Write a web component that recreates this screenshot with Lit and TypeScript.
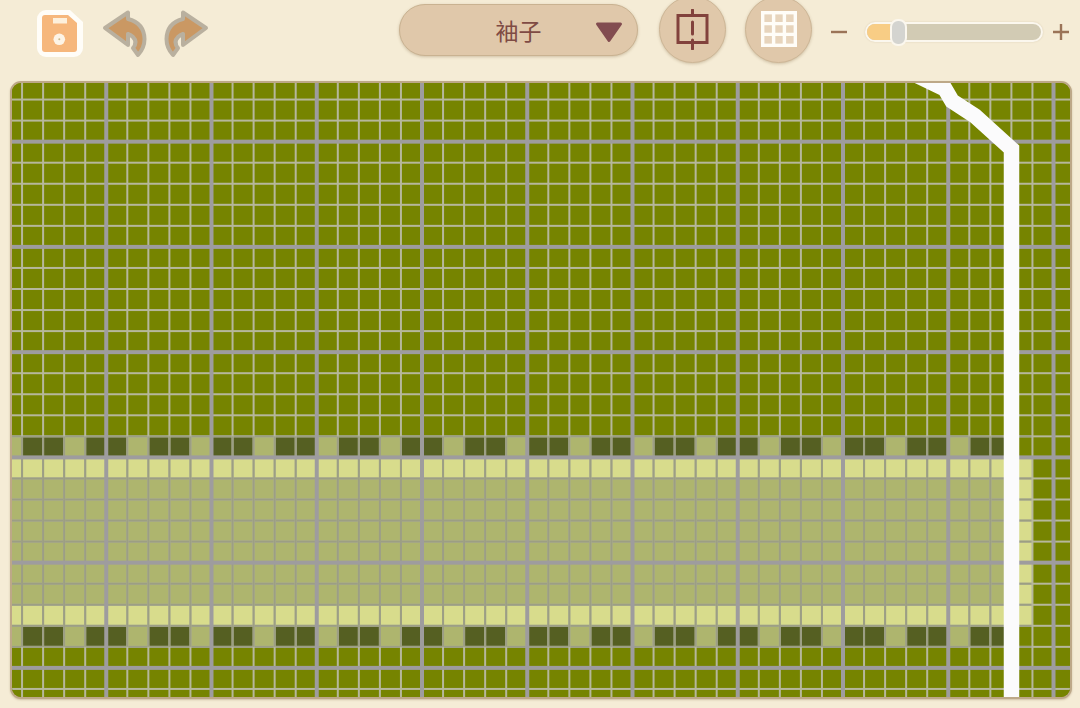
import { LitElement, html, css, svg } from "lit";
import { customElement } from "lit/decorators.js";

const P = 21.05, OX = 1, OY = 36.4, COLS = 50, ROWS = 31;
const xAt = (n: number) => OX + P * n;
const yAt = (n: number) => OY + P * n;
const BAND_END = xAt(49);
const GREEN = "#768400", MID = "#aeb56e", LIGHT = "#d8dc8c", DARK = "#555f22";
const THICK = "#9e9c9e", THIN_ON_GREEN = "#b6b79c", THIN_ON_BAND = "#9c9e84";

function cellColor(c: number, r: number): string {
  if (r === 19 || r === 28) {
    if (c >= 48) return GREEN;
    return c % 3 === 0 ? MID : DARK;
  }
  if (r >= 20 && r <= 27) {
    if (c === 48) return LIGHT;
    return r === 20 || r === 27 ? LIGHT : MID;
  }
  return GREEN;
}

function gridCells() {
  const out = [];
  for (let r = 19; r <= 28; r++) {
    for (let c = 0; c <= 48; c++) {
      const f = cellColor(c, r);
      if (f !== GREEN) out.push(svg`<rect x=${xAt(c)} y=${yAt(r)} width=${P + 0.5} height=${P + 0.5} fill=${f}></rect>`);
    }
  }
  return out;
}

function gridLines() {
  const out = [];
  const bandTop = yAt(19), bandBottom = yAt(29);
  for (let k = 0; k <= ROWS; k++) {
    if (k % 5 === 0) continue;
    const y = yAt(k) - 1;
    out.push(svg`<rect x="0" y=${y} width="1080" height="2" fill=${THIN_ON_GREEN}></rect>`);
    if (k >= 19 && k <= 29) out.push(svg`<rect x="0" y=${y} width=${BAND_END} height="2" fill=${THIN_ON_BAND}></rect>`);
  }
  for (let c = 0; c <= COLS + 1; c++) {
    if (c % 5 === 0) continue;
    const x = xAt(c) - 1;
    out.push(svg`<rect x=${x} y="0" width="2" height="708" fill=${THIN_ON_GREEN}></rect>`);
    if (c <= 48) out.push(svg`<rect x=${x} y=${bandTop} width="2" height=${bandBottom - bandTop} fill=${THIN_ON_BAND}></rect>`);
  }
  for (let k = 0; k <= ROWS; k += 5) {
    out.push(svg`<rect x="0" y=${yAt(k) - 2} width="1080" height="4" fill=${THICK}></rect>`);
  }
  for (let c = 0; c <= COLS; c += 5) {
    out.push(svg`<rect x=${xAt(c) - 2} y="0" width="4" height="708" fill=${THICK}></rect>`);
  }
  return out;
}

const ARROW = "M3 24 L26 8.5 V15 Q42 19 42.5 35 Q42.5 44 36 51 L31 44 Q36 38 31 33 Q29 31 26 30 V41 Z";

@customElement("app-root")
export class AppRoot extends LitElement {
  static styles = css`
    :host { display: block; width: 1080px; height: 708px; overflow: hidden; background: #f5ecd6; font-family: "Noto Sans CJK SC", "Liberation Sans", sans-serif; }
    .bar { display: flex; align-items: center; height: 58px; margin-bottom: 23px; padding-left: 37px; }
    .save { width: 46px; height: 47px; margin-right: 19px; margin-top: 9px; flex: none; }
    .arrow { width: 46px; height: 50px; flex: none; overflow: visible; }
    .redo { margin-left: 15px; margin-right: 190px; transform: scaleX(-1); }
    .select { box-sizing: border-box; width: 239px; height: 52px; margin-top: 2px; border-radius: 26px; background: #e0c8aa; border: 1px solid #c9b291; box-shadow: 0 1px 3px rgba(120, 90, 50, .3); display: grid; grid-template-columns: 1fr auto 1fr; align-items: center; margin-right: 21px; flex: none; color: #7f4b44; font-size: 23px; line-height: 46px; }
    .select .label { grid-column: 2; }
    .select svg { justify-self: end; margin-right: 14px; margin-top: 4px; }
    .round { box-sizing: border-box; width: 67px; height: 67px; border-radius: 50%; background: #e0c8aa; border: 1px solid #cdb696; box-shadow: 0 1px 3px rgba(120, 90, 50, .3); display: flex; align-items: center; justify-content: center; flex: none; margin-right: 18px; }
    .split { margin-right: 19px; }
    .sign { width: 20px; height: 20px; flex: none; margin-left: -1px; margin-top: 6px; }
    .track { box-sizing: border-box; width: 178px; height: 20px; margin: 6px 9px 0 16px; border-radius: 10px; border: 2px solid #fbf7ee; background: #d2cbb4; flex: none; display: flex; align-items: center; box-shadow: 0 0 2px rgba(120, 90, 50, .2); }
    .fill { width: 23px; align-self: stretch; background: #f8cd85; border-radius: 8px 0 0 8px; }
    .thumb { box-sizing: border-box; width: 17px; height: 27px; border-radius: 8px; border: 2px solid #fbf7ee; background: #d4d4d0; flex: none; }
    .canvas { box-sizing: border-box; width: 1062px; height: 618px; margin-left: 10px; border: 2px solid #bda888; border-radius: 11px; overflow: hidden; background: #768400; box-shadow: 0 1px 2px rgba(120, 90, 50, .3); }
    .canvas svg { display: block; }
  `;

  render() {
    return html`
      <div class="bar">
        <svg class="save" viewBox="0 0 46 47">
          <path d="M9 0H33L46 12V38A9 9 0 0 1 37 47H9A9 9 0 0 1 0 38V9A9 9 0 0 1 9 0Z" fill="#fffdf8"></path>
          <path d="M8 5H31L40 13V39A3 3 0 0 1 37 42H8A3 3 0 0 1 5 39V8A3 3 0 0 1 8 5Z" fill="#f6b77c"></path>
          <rect x="16" y="8" width="14" height="5.5" fill="#fdf0dc"></rect>
          <circle cx="22.3" cy="29.3" r="5.8" fill="#fdf4e6"></circle>
          <circle cx="22.3" cy="29.3" r="1" fill="#c9b88a"></circle>
        </svg>
        <svg class="arrow" viewBox="0 0 46 50">
          <path d=${ARROW} fill="#ca9863" stroke="#b9b09f" stroke-width="4" stroke-linejoin="round"></path>
        </svg>
        <svg class="arrow redo" viewBox="0 0 46 50">
          <path d=${ARROW} fill="#ca9863" stroke="#b9b09f" stroke-width="4" stroke-linejoin="round"></path>
        </svg>
        <div class="select">
          <span class="label">袖子</span>
          <svg width="28" height="22" viewBox="0 0 28 22"><path d="M2.5 3H25.5L14 19.5Z" fill="#824c50" stroke="#824c50" stroke-width="3" stroke-linejoin="round"></path></svg>
        </div>
        <div class="round split">
          <svg width="33" height="41" viewBox="0 0 33 41" fill="none" stroke="#82423c" stroke-width="3" stroke-linecap="round">
            <rect x="2" y="6.5" width="29" height="27" stroke-linecap="butt"></rect>
            <path d="M16.5 1V6M16.5 13V25M16.5 31V40"></path>
          </svg>
        </div>
        <div class="round">
          <svg width="36" height="36" viewBox="0 0 36 36" fill="none" stroke="#fffdf8" stroke-width="3.4">
            <rect x="1.7" y="1.7" width="32.6" height="32.6" fill="#ead9c3" fill-opacity=".7"></rect>
            <path d="M12.6 1V35M23.4 1V35M1 12.6H35M1 23.4H35"></path>
          </svg>
        </div>
        <svg class="sign" viewBox="0 0 20 20"><path d="M2 10H18" stroke="#9b7458" stroke-width="2.4"></path></svg>
        <div class="track">
          <div class="fill"></div>
          <div class="thumb"></div>
        </div>
        <svg class="sign" viewBox="0 0 20 20"><path d="M2 10H18M10 2V18" stroke="#9b7458" stroke-width="2.4"></path></svg>
      </div>
      <div class="canvas">
        <svg width="1058" height="614" viewBox="12 83 1058 614">
          <rect x="0" y="0" width="1080" height="708" fill=${GREEN}></rect>
          ${gridCells()}
          ${gridLines()}
          <path d="M918 76L945 89L952 101L975 116L1011.5 149V700" fill="none" stroke="#fbfbfc" stroke-width="15.5" stroke-linejoin="miter"></path>
        </svg>
      </div>
    `;
  }
}
